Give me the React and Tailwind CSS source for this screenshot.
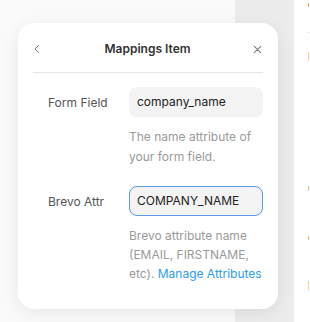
import React from "react";

const ChevronLeft = () => (
  <svg width="12" height="12" viewBox="0 0 24 24" fill="none" stroke="#777" strokeWidth="2" strokeLinecap="round" strokeLinejoin="round">
    <path d="M15 5l-7 7 7 7" />
  </svg>
);

const Close = () => (
  <svg width="11" height="11" viewBox="0 0 24 24" fill="none" stroke="#777" strokeWidth="2.2" strokeLinecap="round">
    <path d="M5 5l14 14M19 5L5 19" />
  </svg>
);

const App = () => {
  return (
    <div className="flex w-[310px] h-[322px] overflow-hidden bg-white font-['Inter',sans-serif]">
      <div className="flex w-[294px] bg-[linear-gradient(to_right,#fafafa_0,#fafafa_235px,#ececec_235px)]">
        <div className="mt-[23px] ml-[18px] w-[260px] h-[286px] bg-white rounded-[16px] shadow-[0_4px_18px_rgba(0,0,0,0.08)] px-[15px]">
          <div className="flex items-center justify-between h-[50px] pt-[3px] border-b border-[#e6e6e6]">
            <div className="w-[12px] ml-[-2px]">
              <ChevronLeft />
            </div>
            <div className="text-[12px] font-semibold text-[#333]">Mappings Item</div>
            <div className="w-[12px] mr-[-1px]">
              <Close />
            </div>
          </div>

          <div className="flex mt-[14px] pl-[15px]">
            <div className="w-[81px] pt-[7px] text-[12px] text-[#555]">Form Field</div>
            <div className="flex-1">
              <div className="h-[30px] rounded-[8px] bg-[#f3f3f3] px-[8px] flex items-center text-[12px] text-[#222]">
                company_name
              </div>
              <p className="mt-[10px] text-[12px] leading-[20px] text-[#9a9a9a]">
                The name attribute of your form field.
              </p>
            </div>
          </div>

          <div className="flex mt-[19px] pl-[15px]">
            <div className="w-[81px] pt-[7px] text-[12px] text-[#555]">Brevo Attr</div>
            <div className="flex-1">
              <div className="h-[30px] rounded-[8px] bg-[#f3f3f3] border border-[#5b9be6] px-[7px] flex items-center text-[12px] text-[#222]">
                COMPANY_NAME
              </div>
              <p className="mt-[10px] text-[12px] leading-[19px] text-[#9a9a9a]">
                Brevo attribute name (EMAIL, FIRSTNAME, etc).{" "}
                <span className="text-[#2d9cf0]">Manage Attributes</span>
              </p>
            </div>
          </div>
        </div>
      </div>
      <div className="relative flex-1">
        <span className="absolute left-[14px] top-[3px] w-[1px] h-[4px] bg-[#f0a060]" />
        <span className="absolute left-[14px] top-[32px] w-[1px] h-[1px] bg-[#ccc]" />
        <span className="absolute left-[14px] top-[52px] w-[1px] h-[9px] bg-[#f5d690]" />
        <span className="absolute left-[14px] top-[186px] w-[1px] h-[5px] bg-[#f0c080]" />
        <span className="absolute left-[14px] top-[236px] w-[1px] h-[4px] bg-[#f0b070]" />
        <span className="absolute left-[14px] top-[281px] w-[1px] h-[9px] bg-[#f5d690]" />
      </div>
    </div>
  );
};

export default App;
